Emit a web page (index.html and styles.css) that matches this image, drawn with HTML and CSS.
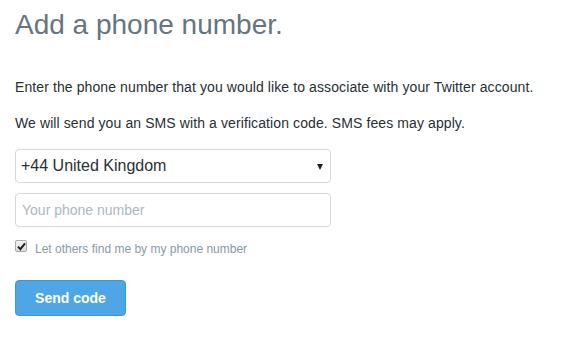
FILE: index.html
```html
<!DOCTYPE html>
<html>
<head>
<meta charset="utf-8">
<link rel="stylesheet" href="styles.css">
</head>
<body>
<div class="page">
  <h1 class="title">Add a phone number.</h1>
  <p class="text first">Enter the phone number that you would like to associate with your Twitter account.</p>
  <p class="text">We will send you an SMS with a verification code. SMS fees may apply.</p>
  <div class="select">
    <span class="select-value">+44 United Kingdom</span>
    <span class="arrow"></span>
  </div>
  <div class="input"><span class="placeholder">Your phone number</span></div>
  <label class="check-row">
    <span class="checkbox">
      <svg width="9" height="9" viewBox="0 0 9 9"><path d="M1 4.6 L3.4 7.2 L8 1.4" fill="none" stroke="#222" stroke-width="2"/></svg>
    </span>
    <span class="check-label">Let others find me by my phone number</span>
  </label>
  <button class="btn">Send code</button>
</div>
</body>
</html>
```
FILE: styles.css
```css
* { box-sizing: border-box; }
html, body { margin: 0; padding: 0; background: #fff; }
body { font-family: "Liberation Sans", Arial, sans-serif; }
.page { padding: 8px 15px 0 15px; display: flex; flex-direction: column; align-items: flex-start; }
.title { margin: 0; font-size: 28px; font-weight: normal; color: #66757f; line-height: 34px; letter-spacing: 0; }
.text { margin: 0; font-size: 14px; color: #292f33; line-height: 18px; letter-spacing: 0.1px; }
.text.first { margin-top: 36px; }
.text + .text { margin-top: 18px; }
.select { margin-top: 17px; width: 316px; height: 34px; border: 1px solid #d5d8db; border-radius: 4px; display: flex; align-items: center; justify-content: space-between; padding: 0 7px 0 5px; }
.select-value { font-size: 16px; color: #292f33; }
.arrow { width: 0; height: 0; border-left: 3.5px solid transparent; border-right: 3.5px solid transparent; border-top: 6px solid #222; margin-top: 2px; }
.input { margin-top: 10px; width: 316px; height: 34px; border: 1px solid #d5d8db; border-radius: 4px; display: flex; align-items: center; padding: 0 6px; }
.placeholder { font-size: 14px; color: #aab8c2; }
.check-row { margin-top: 13px; display: flex; align-items: flex-start; gap: 8px; }
.checkbox { width: 12px; height: 12px; border: 1px solid #a9a9a9; border-radius: 2px; background: linear-gradient(#f2f2f2, #dcdcdc); display: flex; align-items: center; justify-content: center; }
.check-label { font-size: 12px; color: #8899a6; margin-top: 2px; }
.btn { margin-top: 24px; width: 111px; height: 36px; background: #4ea6e7; border: 1px solid #3d96d9; border-radius: 4px; color: #fff; font-family: "Liberation Sans", Arial, sans-serif; font-weight: bold; font-size: 14px; padding: 0; }
```
